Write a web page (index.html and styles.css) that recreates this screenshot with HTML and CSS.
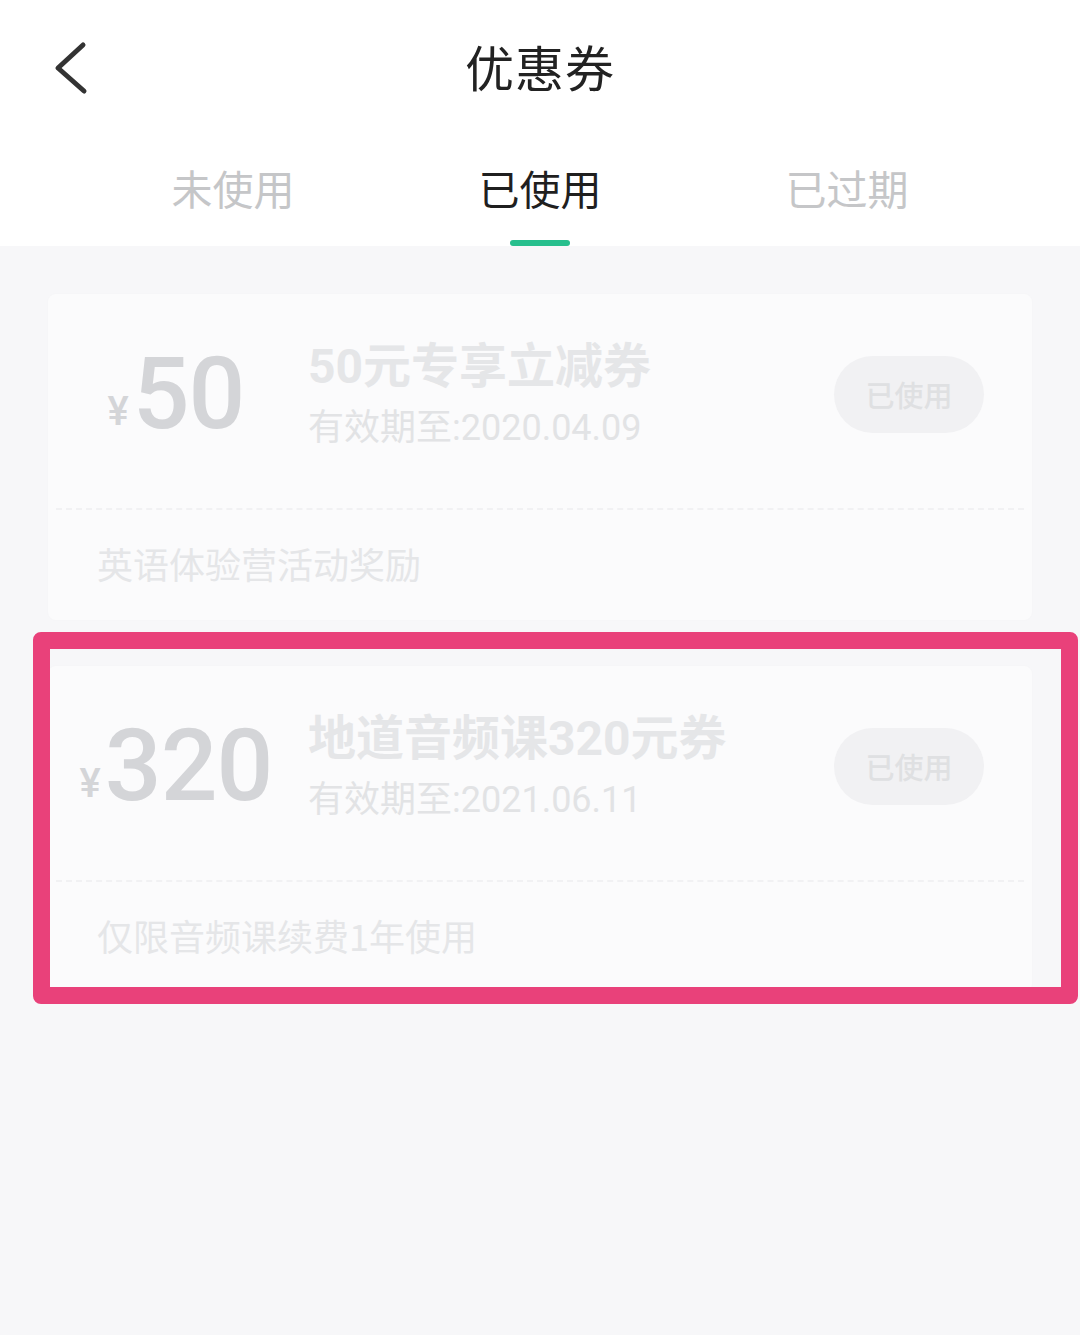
FILE: index.html
```html
<!DOCTYPE html>
<html lang="zh-CN">
<head>
<meta charset="utf-8">
<title>优惠券</title>
<link rel="stylesheet" href="styles.css">
</head>
<body>
<div class="page">
  <header class="header">
    <div class="topbar">
      <div class="back">
        <svg width="40" height="60" viewBox="0 0 40 60" aria-hidden="true">
          <polyline points="33,7 8,30 34,53" fill="none" stroke="#333333" stroke-width="5" stroke-linecap="round" stroke-linejoin="round"/>
        </svg>
      </div>
      <h1 class="title">优惠券</h1>
      <div></div>
    </div>
    <nav class="tabs">
      <div class="tab"><span class="tab-text">未使用</span><span class="tab-bar"></span></div>
      <div class="tab active"><span class="tab-text">已使用</span><span class="tab-bar"></span></div>
      <div class="tab"><span class="tab-text">已过期</span><span class="tab-bar"></span></div>
    </nav>
  </header>

  <main class="list">
    <section class="card">
      <div class="card-main">
        <div class="amount"><span class="yen">¥</span><span class="num">50</span></div>
        <div class="info">
          <div class="name">50元专享立减券</div>
          <div class="date">有效期至:2020.04.09</div>
        </div>
        <div class="btn">已使用</div>
      </div>
      <div class="divider"></div>
      <div class="card-note">英语体验营活动奖励</div>
    </section>

    <section class="card highlighted">
      <div class="card-main">
        <div class="amount"><span class="yen">¥</span><span class="num">320</span></div>
        <div class="info">
          <div class="name">地道音频课320元券</div>
          <div class="date">有效期至:2021.06.11</div>
        </div>
        <div class="btn">已使用</div>
      </div>
      <div class="divider"></div>
      <div class="card-note">仅限音频课续费1年使用</div>
      <div class="mark"></div>
    </section>
  </main>
</div>
</body>
</html>
```

FILE: styles.css
```css
* { box-sizing: border-box; margin: 0; padding: 0; }

html, body {
  width: 1080px;
  height: 1335px;
  background: #f7f7f9;
  font-family: "Noto Sans CJK SC", "Noto Sans", sans-serif;
  overflow: hidden;
}

.page {
  width: 1080px;
  min-height: 1335px;
  background: #f7f7f9;
}

.header {
  background: #ffffff;
}

.topbar {
  height: 136px;
  display: grid;
  grid-template-columns: 1fr auto 1fr;
  align-items: center;
}

.back {
  padding-left: 50px;
  display: flex;
  align-items: center;
  height: 60px;
}

.title {
  font-size: 49px;
  font-weight: 400;
  color: #222222;
  line-height: 60px;
  letter-spacing: 1px;
  margin-top: -4px;
}

.tabs {
  display: grid;
  grid-template-columns: repeat(3, 307px);
  justify-content: center;
  height: 110px;
  padding-top: 26px;
}

.tab {
  display: flex;
  flex-direction: column;
  align-items: center;
}

.tab-text {
  font-size: 41px;
  line-height: 50px;
  color: #c5c6c8;
  font-weight: 400;
}

.tab-bar {
  margin-top: 28px;
  width: 60px;
  height: 6px;
  border-radius: 3px;
  background: transparent;
}

.tab.active .tab-text { color: #1f1f1f; }
.tab.active .tab-bar { background: #27bf8d; }

.list {
  padding: 48px 48px 0;
  display: flex;
  flex-direction: column;
  gap: 46px;
}

.card {
  position: relative;
  background: #fbfbfc;
  border-radius: 8px;
  box-shadow: 0 0 3px rgba(0, 0, 0, 0.02);
}

.card-main {
  height: 214px;
  display: flex;
  align-items: center;
  padding: 0 48px 14px 0;
}

.amount {
  width: 256px;
  display: flex;
  align-items: baseline;
  justify-content: center;
  color: #d4d5d8;
  font-family: "Roboto", "Noto Sans", sans-serif;
}

.yen {
  font-size: 40px;
  font-weight: 500;
  margin-right: 4px;
  position: relative;
  top: -3px;
}

.num {
  font-size: 100px;
  font-weight: 500;
  line-height: 100px;
  letter-spacing: -1px;
}

.info {
  flex: 1;
  padding-left: 4px;
  display: flex;
  flex-direction: column;
}

.name {
  font-family: "Roboto", "Noto Sans CJK SC", sans-serif;
  font-size: 48px;
  font-weight: 700;
  line-height: 58px;
  color: #e5e6e8;
}

.date {
  font-family: "Roboto", "Noto Sans CJK SC", sans-serif;
  font-size: 36px;
  line-height: 44px;
  color: #e2e3e5;
  margin-top: 10px;
}

.btn {
  width: 150px;
  height: 77px;
  border-radius: 39px;
  background: #f1f1f3;
  color: #dfe0e2;
  font-size: 29px;
  font-weight: 500;
  display: flex;
  align-items: center;
  justify-content: center;
}

.divider {
  margin: 0 8px;
  border-top: 2px dashed #f1f1f3;
}

.card-note {
  height: 110px;
  display: flex;
  align-items: center;
  padding: 0 0 4px 49px;
  font-size: 36px;
  color: #e5e6e8;
}

.mark {
  position: absolute;
  left: -15px;
  top: -34px;
  width: 1045px;
  height: 372px;
  border: 17px solid #e9417a;
  border-radius: 8px;
  pointer-events: none;
}
```
